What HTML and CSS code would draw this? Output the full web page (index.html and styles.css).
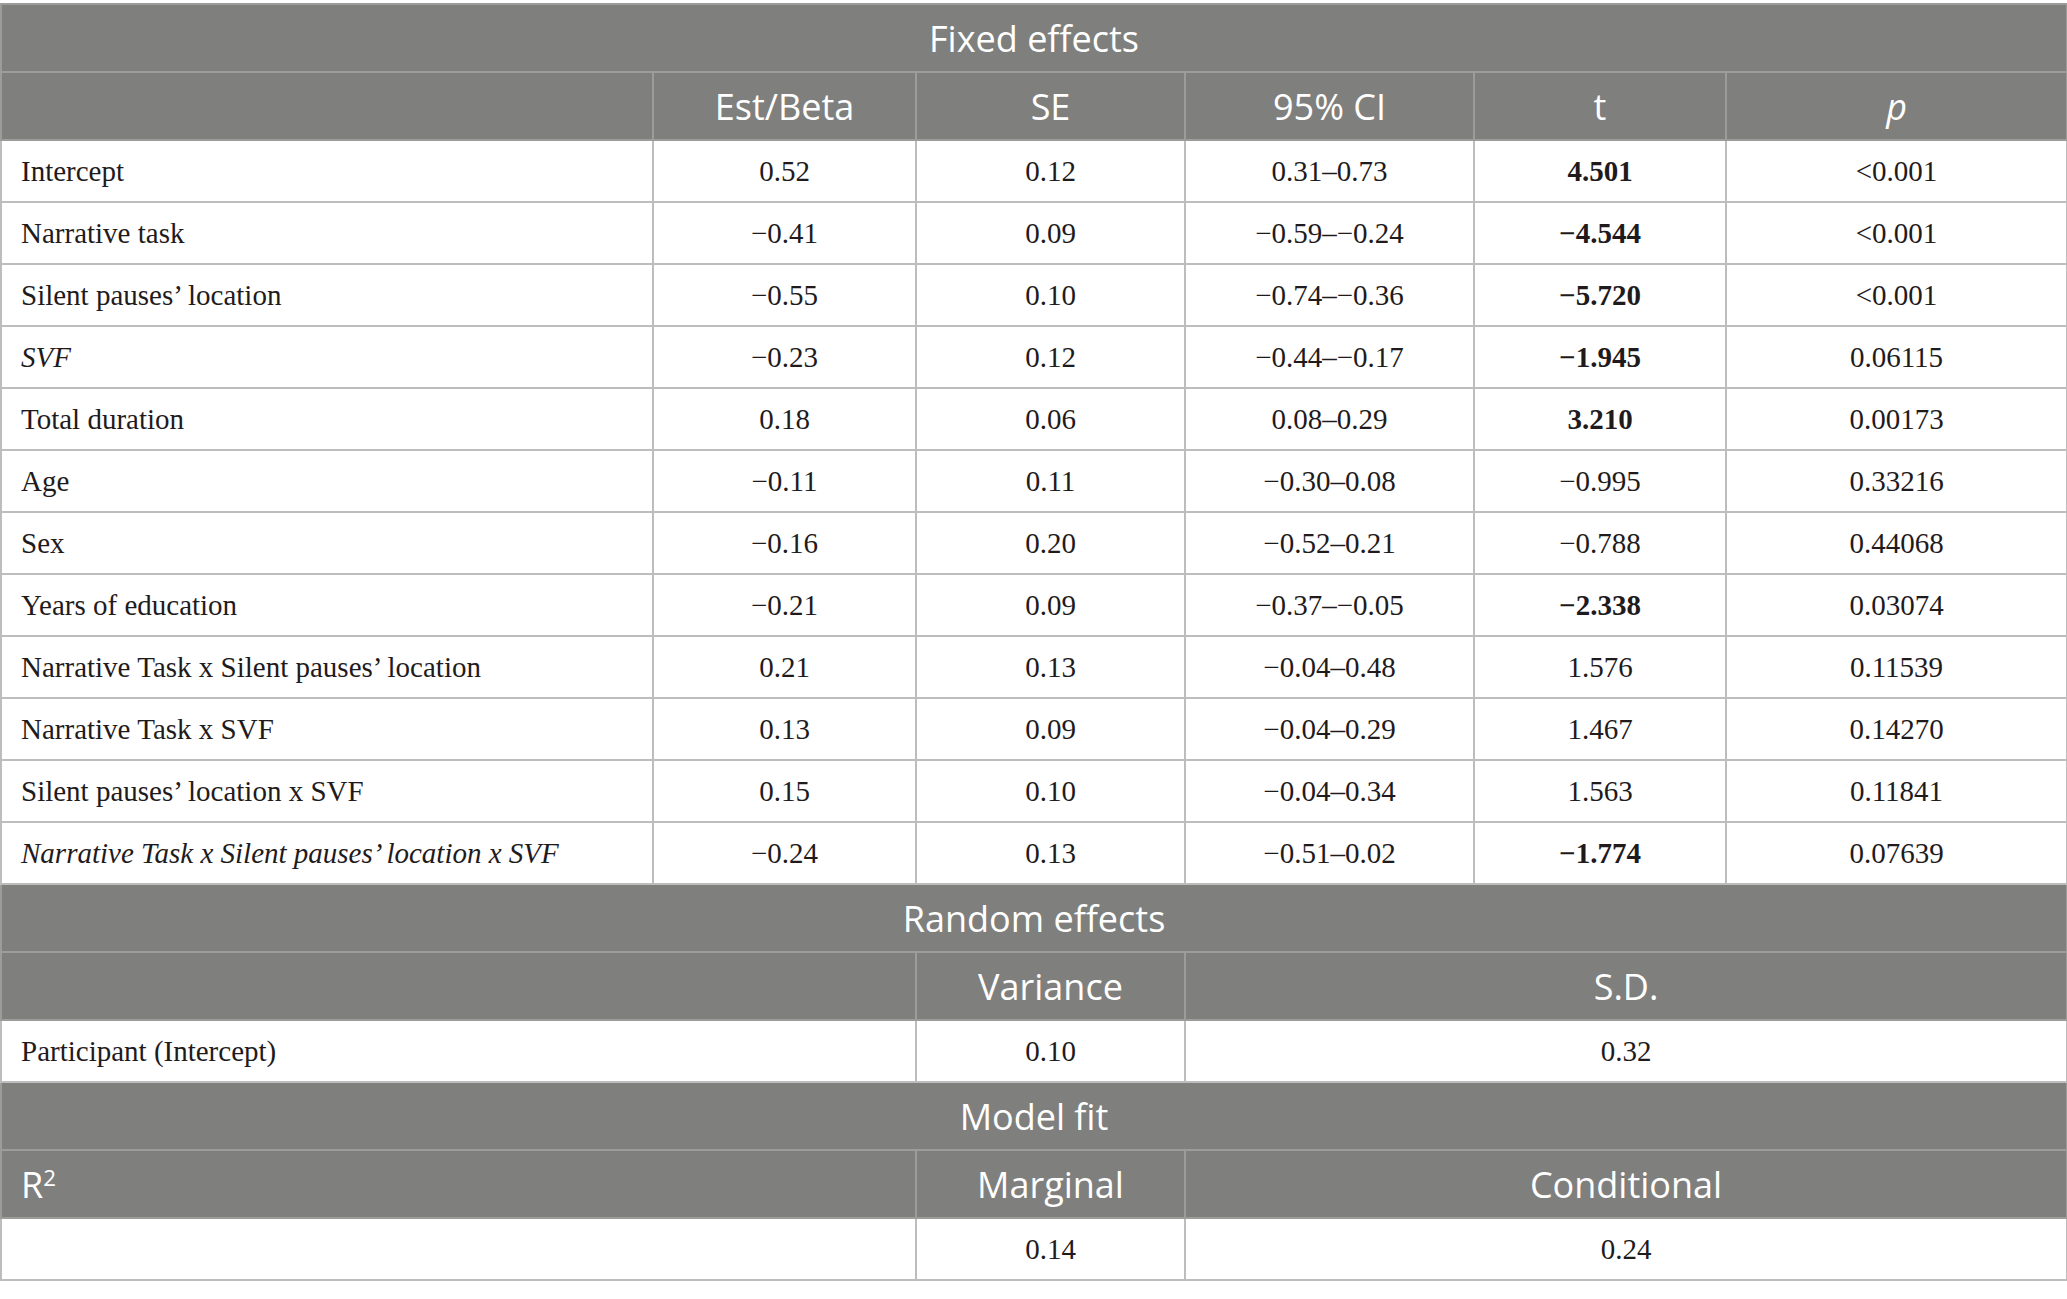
FILE: index.html
```html
<!DOCTYPE html>
<html lang="en">
<head>
  <meta charset="UTF-8">
  <title>Mixed model results</title>
  <link rel="stylesheet" href="styles.css">
</head>
<body>
  <table class="stats">
    <colgroup>
      <col class="col-label">
      <col class="col-est">
      <col class="col-se">
      <col class="col-ci">
      <col class="col-t">
      <col class="col-p">
    </colgroup>
    <tbody>
      <!-- Fixed effects -->
      <tr class="section"><th colspan="6">Fixed effects</th></tr>
      <tr class="head">
        <th></th>
        <th>Est/Beta</th>
        <th>SE</th>
        <th>95% CI</th>
        <th>t</th>
        <th><i>p</i></th>
      </tr>
      <tr><td class="label">Intercept</td><td>0.52</td><td>0.12</td><td>0.31–0.73</td><td><b>4.501</b></td><td>&lt;0.001</td></tr>
      <tr><td class="label">Narrative task</td><td>−0.41</td><td>0.09</td><td>−0.59–−0.24</td><td><b>−4.544</b></td><td>&lt;0.001</td></tr>
      <tr><td class="label">Silent pauses’ location</td><td>−0.55</td><td>0.10</td><td>−0.74–−0.36</td><td><b>−5.720</b></td><td>&lt;0.001</td></tr>
      <tr><td class="label"><i>SVF</i></td><td>−0.23</td><td>0.12</td><td>−0.44–−0.17</td><td><b>−1.945</b></td><td>0.06115</td></tr>
      <tr><td class="label">Total duration</td><td>0.18</td><td>0.06</td><td>0.08–0.29</td><td><b>3.210</b></td><td>0.00173</td></tr>
      <tr><td class="label">Age</td><td>−0.11</td><td>0.11</td><td>−0.30–0.08</td><td>−0.995</td><td>0.33216</td></tr>
      <tr><td class="label">Sex</td><td>−0.16</td><td>0.20</td><td>−0.52–0.21</td><td>−0.788</td><td>0.44068</td></tr>
      <tr><td class="label">Years of education</td><td>−0.21</td><td>0.09</td><td>−0.37–−0.05</td><td><b>−2.338</b></td><td>0.03074</td></tr>
      <tr><td class="label">Narrative Task x Silent pauses’ location</td><td>0.21</td><td>0.13</td><td>−0.04–0.48</td><td>1.576</td><td>0.11539</td></tr>
      <tr><td class="label">Narrative Task x SVF</td><td>0.13</td><td>0.09</td><td>−0.04–0.29</td><td>1.467</td><td>0.14270</td></tr>
      <tr><td class="label">Silent pauses’ location x SVF</td><td>0.15</td><td>0.10</td><td>−0.04–0.34</td><td>1.563</td><td>0.11841</td></tr>
      <tr><td class="label"><i>Narrative Task x Silent pauses’ location x SVF</i></td><td>−0.24</td><td>0.13</td><td>−0.51–0.02</td><td><b>−1.774</b></td><td>0.07639</td></tr>

      <!-- Random effects -->
      <tr class="section"><th colspan="6">Random effects</th></tr>
      <tr class="head">
        <th colspan="2"></th>
        <th>Variance</th>
        <th colspan="3">S.D.</th>
      </tr>
      <tr><td class="label" colspan="2">Participant (Intercept)</td><td>0.10</td><td colspan="3">0.32</td></tr>

      <!-- Model fit -->
      <tr class="section"><th colspan="6">Model fit</th></tr>
      <tr class="head">
        <th class="label" colspan="2">R<sup>2</sup></th>
        <th>Marginal</th>
        <th colspan="3">Conditional</th>
      </tr>
      <tr><td colspan="2"></td><td>0.14</td><td colspan="3">0.24</td></tr>
    </tbody>
  </table>
</body>
</html>
```

FILE: styles.css
```css
:root {
  --head-bg: #7f807e;
  --head-line: #9c9d9b;
  --grid: #bdbdbd;
  --text: #1f1b1c;
}
body {
  margin: 0;
  background: #fff;
}
.stats {
  width: 2066px;
  margin-top: 3px;
  border-collapse: collapse;
  table-layout: fixed;
  border: 2px solid var(--grid);
  font-family: "Liberation Serif", "Times New Roman", serif;
  color: var(--text);
}
.col-label { width: 652px; }
.col-est { width: 263px; }
.col-se { width: 269px; }
.col-ci { width: 289px; }
.col-t { width: 252px; }
.col-p { width: 341px; }

.stats th {
  background: var(--head-bg);
  color: #fff;
  font-family: "Open Sans", "Noto Sans", sans-serif;
  font-weight: 400;
  font-size: 36px;
  height: 68px;
  padding: 0 19px;
  border: 2px solid var(--head-line);
  text-align: center;
  vertical-align: middle;
  box-sizing: border-box;
}
.stats td {
  font-size: 29px;
  height: 62px;
  padding: 0 19px;
  border: 2px solid var(--grid);
  text-align: center;
  vertical-align: middle;
  box-sizing: border-box;
  white-space: nowrap;
}
.stats .label {
  text-align: left;
}
.stats b {
  font-weight: 700;
}
.stats sup {
  font-size: 0.62em;
  vertical-align: 0.55em;
  line-height: 0;
}
```
